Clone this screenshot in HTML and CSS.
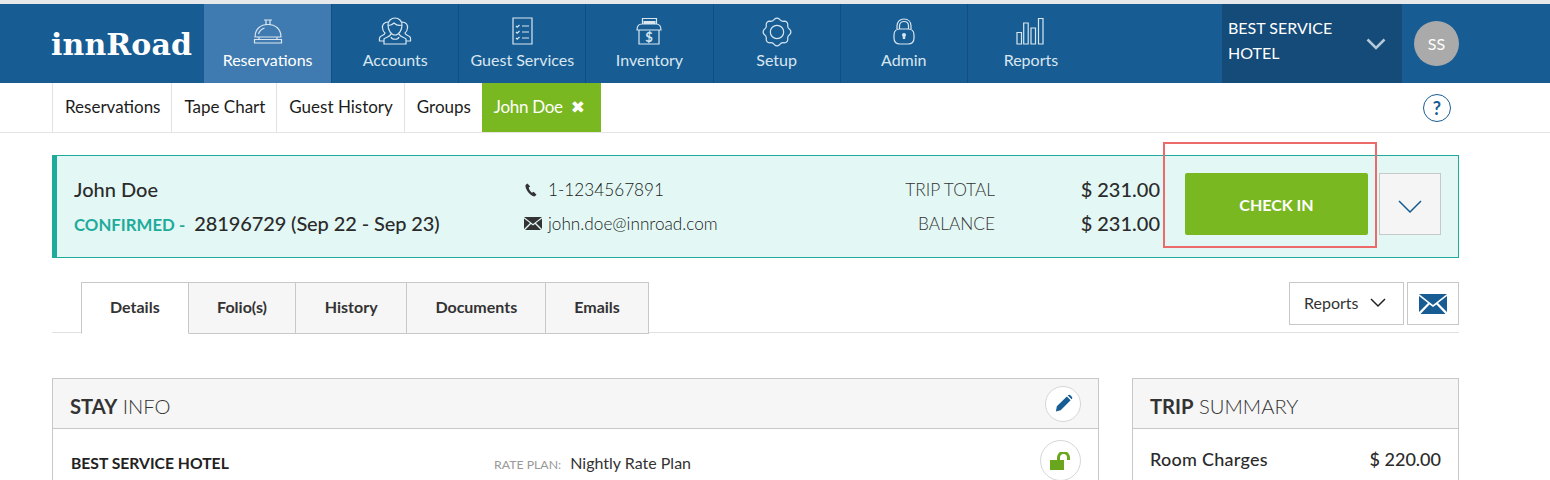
FILE: index.html
```html
<!DOCTYPE html>
<html lang="en">
<head>
    <meta charset="UTF-8">
    <title>innRoad - Reservations</title>
    <link rel="stylesheet" href="styles.css">
</head>
<body>
    <header class="top-bar">
        <a href="#" class="logo">innRoad</a>
        <nav class="main-nav">
            <a href="#" class="nav-item active">
                <svg class="nav-icon" viewBox="0 0 32 30"><path d="M3 20C3 12 8.500 7.500 16 7.500S29 12 29 20zM12 3h8M14 3v4.500M18 3v4.500M2.500 22.500h27v3.500h-27zM7 20v2.500M25 20v2.500M6.500 17c.8-3 3-5 6-6"/></svg>
                <span>Reservations</span>
            </a>
            <a href="#" class="nav-item">
                <svg class="nav-icon" viewBox="0 0 32 30"><path d="M9 8c0-4 3-7 7-7s7 3 7 7c0 5-3 10-7 10S9 13 9 8zM9 8c3 1 5-1 6-2 2 2 5 3 8 2M12 17c-1 3-5 3-7 5v5h22v-5c-2-2-6-2-7-5M12 20c1 3 7 3 8 0M9 5C5 5 3 8 3.500 11c.2 2 1 4 2.500 5 0 2-3 2-5 4-1 1-.5 3-.5 4H5M23 5c4 0 6 3 5.500 6-.2 2-1 4-2.500 5 0 2 3 2 5 4 1 1 .5 3 .5 4H27"/></svg>
                <span>Accounts</span>
            </a>
            <a href="#" class="nav-item">
                <svg class="nav-icon" viewBox="0 0 32 30"><path d="M7 1h19v26H7zM10 9l1.200 1.200L13.500 8M10 15l1.200 1.200L13.500 14M10 21l1.200 1.200L13.500 20M16 9h7M16 15h7M16 21h7"/></svg>
                <span>Guest Services</span>
            </a>
            <a href="#" class="nav-item">
                <svg class="nav-icon" viewBox="0 0 32 30"><path d="M9.500 7V1.500h14V7M4 13c0-4 2-6 5-6h14c3 0 5 2 5 6zM6 13v14h20V13"/><path class="icon-fill" d="M10.500 4h12v3h-12z"/><text x="16" y="25" class="nav-icon-text">$</text></svg>
                <span>Inventory</span>
            </a>
            <a href="#" class="nav-item">
                <svg class="nav-icon" viewBox="0 0 32 30"><circle cx="16" cy="15" r="6.700"/><path d="M28.750 12.460Q31 15 28.750 17.540Q26.160 19.210 26.810 22.220Q26.600 25.600 23.220 25.810Q20.210 25.160 18.540 27.750Q16 30 13.460 27.750Q11.790 25.160 8.780 25.810Q5.400 25.600 5.190 22.220Q5.840 19.210 3.250 17.540Q1 15 3.250 12.460Q5.840 10.790 5.190 7.780Q5.400 4.400 8.780 4.190Q11.790 4.840 13.460 2.250Q16 0 18.540 2.250Q20.210 4.840 23.220 4.190Q26.600 4.400 26.810 7.780Q26.160 10.790 28.750 12.460z"/></svg>
                <span>Setup</span>
            </a>
            <a href="#" class="nav-item">
                <svg class="nav-icon" viewBox="0 0 32 30"><path d="M9 12V9c0-4.500 3-7 7-7s7 2.500 7 7v3M11.500 12V9c0-3 2-4.500 4.500-4.500s4.500 1.500 4.500 4.500v3M6 18c0-4 2-6 6-6h8c4 0 6 2 6 6v3c0 4-2 6-6 6h-8c-4 0-6-2-6-6z"/><path class="icon-fill" d="M14 18a2 2 0 1 1 4 0c0 .8-.4 1.200-.8 1.600V22h-2.400v-2.400c-.4-.4-.8-.8-.8-1.600z"/></svg>
                <span>Admin</span>
            </a>
            <a href="#" class="nav-item">
                <svg class="nav-icon" viewBox="0 0 32 30"><path d="M2 15.500h4.500V27H2zM8.700 6h4.500v21H8.700zM16 11h4.500v16H16zM23.500 1.500H28V27h-4.500z"/></svg>
                <span>Reports</span>
            </a>
        </nav>
        <div class="top-right">
            <div class="hotel-select">
                <span class="hotel-name">BEST SERVICE HOTEL</span>
                <svg class="hotel-chevron" viewBox="0 0 20 12"><path d="M1.500 1.500L10 10l8.500-8.500"/></svg>
            </div>
            <div class="avatar">SS</div>
        </div>
    </header>

    <div class="sub-bar">
        <a href="#" class="sub-item">Reservations</a>
        <a href="#" class="sub-item">Tape Chart</a>
        <a href="#" class="sub-item">Guest History</a>
        <a href="#" class="sub-item">Groups</a>
        <a href="#" class="sub-item guest-tab">John Doe <span class="close-x">✖</span></a>
        <a href="#" class="help">?</a>
    </div>

    <main class="content">
        <section class="banner">
            <div class="banner-guest">
                <div class="guest-name">John Doe</div>
                <div class="guest-status"><span class="status">CONFIRMED -</span> 28196729 (Sep 22 - Sep 23)</div>
            </div>
            <div class="banner-contact">
                <div class="contact-row">
                    <svg class="contact-icon" viewBox="0 0 16 16"><path d="M4.500 1.500L2.500 3c-.8 3.500 4.500 11 9 11.500l2-1.800-2.800-3-1.700 1c-1.500-1-3-3.500-3.300-5.300l1.500-1z"/></svg>
                    <span>1-1234567891</span>
                </div>
                <div class="contact-row">
                    <svg class="contact-icon mail" viewBox="0 0 18 13"><path d="M0 0h18L9 7zM0 1.500V12l6-6zM18 1.500V12l-6-6zM1 13l6-6 2 1.600L11 7l6 6z"/></svg>
                    <span>john.doe@innroad.com</span>
                </div>
            </div>
            <div class="banner-totals">
                <div class="total-row"><span class="total-label">TRIP TOTAL</span><span class="total-value">$ 231.00</span></div>
                <div class="total-row"><span class="total-label">BALANCE</span><span class="total-value">$ 231.00</span></div>
            </div>
            <button class="check-in">CHECK IN</button>
            <button class="more">
                <svg viewBox="0 0 24 13"><path d="M1 1l11 11L23 1"/></svg>
            </button>
            <div class="highlight"></div>
        </section>

        <div class="tab-row">
            <div class="tabs">
                <a href="#" class="tab current">Details</a>
                <a href="#" class="tab">Folio(s)</a>
                <a href="#" class="tab">History</a>
                <a href="#" class="tab tab-docs">Documents</a>
                <a href="#" class="tab">Emails</a>
            </div>
            <div class="tab-actions">
                <button class="reports-btn">Reports
                    <svg viewBox="0 0 16 10"><path d="M1 1l7 7 7-7"/></svg>
                </button>
                <button class="mail-btn">
                    <svg viewBox="0 0 28 20"><path d="M0 0h28L14 11zM0 2v16l9-9zM28 2v16l-9-9zM1.500 20l9-9.500L14 13l3.500-2.500 9 9.500z"/></svg>
                </button>
            </div>
        </div>

        <div class="panels">
            <section class="panel stay">
                <div class="panel-head">
                    <h2><b>STAY</b> INFO</h2>
                    <span class="round-btn edit">
                        <svg viewBox="0 0 20 20"><path d="M13.500 2.500l4 4L7 17l-5 1.500L3 13zM14.500 1.500c1-1 2-1 3 0l1 1c1 1 1 2 0 3z"/></svg>
                    </span>
                </div>
                <div class="panel-body stay-body">
                    <div class="hotel-col">BEST SERVICE HOTEL</div>
                    <div class="rate-col"><span class="rate-label">RATE PLAN:</span> Nightly Rate Plan</div>
                    <span class="round-btn lock">
                        <svg viewBox="0 0 22 18"><path class="lock-body" d="M0 8h14v10H0z"/><path class="lock-arc" d="M8.500 8V5.500a5 5 0 0 1 10 0V8"/></svg>
                    </span>
                </div>
            </section>
            <section class="panel trip">
                <div class="panel-head">
                    <h2><b>TRIP</b> SUMMARY</h2>
                </div>
                <div class="panel-body trip-row">
                    <span class="trip-label">Room Charges</span>
                    <span>$ 220.00</span>
                </div>
            </section>
        </div>
    </main>
</body>
</html>
```

FILE: styles.css
```css
html, body {
    margin: 0;
    padding: 0;
    height: 480px;
    overflow: hidden;
    background-color: #fff;
    color: #2b2b2b;
    font-family: Lato, "Open Sans", sans-serif;
}

a {
    color: inherit;
    text-decoration: none;
}

button {
    font-family: inherit;
    cursor: pointer;
}

/* top bar */
.top-bar {
    display: flex;
    height: 79px;
    border-top: 4px solid #e6e8ea;
    background-color: #175d94;
}

.logo {
    width: 204px;
    box-sizing: border-box;
    padding: 21px 0 0 51px;
    color: #fff;
    font-family: "DejaVu Serif", serif;
    font-size: 30px;
    font-weight: bold;
    line-height: 40px;
    letter-spacing: 0.1px;
}

.main-nav {
    display: flex;
}

.nav-item {
    width: 127.150px;
    box-sizing: border-box;
    display: flex;
    flex-direction: column;
    align-items: center;
    padding-top: 13px;
    border-left: 1px solid #124f80;
    color: #d9e6f0;
    font-size: 16px;
    line-height: 20px;
}

.nav-item.active {
    border-left: none;
    background-color: #3f7bb0;
    color: #fff;
}

.nav-icon {
    width: 32px;
    height: 30px;
    margin-bottom: 3px;
    overflow: visible;
    fill: none;
    stroke: #d9e6f0;
    stroke-width: 1.200;
}

.nav-icon .icon-fill {
    fill: #d9e6f0;
    stroke: none;
}

.nav-icon-text {
    fill: #d9e6f0;
    stroke: none;
    font-size: 13px;
    font-weight: bold;
    text-anchor: middle;
}

.top-right {
    display: flex;
    margin-left: auto;
    padding-right: 91px;
}

.hotel-select {
    width: 180px;
    box-sizing: border-box;
    display: flex;
    align-items: center;
    justify-content: space-between;
    padding: 0 16px 0 6px;
    background-color: #154b78;
    color: #fff;
    font-size: 16px;
    line-height: 25px;
}

.hotel-name {
    width: 125px;
    margin-bottom: 8px;
}

.hotel-chevron {
    width: 20px;
    height: 12px;
    fill: none;
    stroke: #b5cad9;
    stroke-width: 2.500;
}

.avatar {
    width: 45px;
    height: 45px;
    margin: 17px 0 0 12px;
    border-radius: 50%;
    background-color: #aaa;
    color: #fff;
    font-size: 16px;
    line-height: 45px;
    text-align: center;
}

/* second row */
.sub-bar {
    display: flex;
    height: 49px;
    padding: 0 99px 0 52px;
    border-bottom: 1px solid #e4e4e4;
}

.sub-item {
    padding: 0 10.950px 0 12px;
    border-left: 1px solid #e2e2e2;
    color: #1c1c1c;
    font-size: 17px;
    line-height: 48px;
    white-space: nowrap;
}

.guest-tab {
    padding: 0 16.500px 0 12px;
    border-left: none;
    background-color: #7ab821;
    color: #fff;
    letter-spacing: -0.3px;
}

.close-x {
    margin-left: 4px;
    font-family: "DejaVu Sans", sans-serif;
    font-size: 17px;
}

.help {
    width: 26px;
    height: 26px;
    margin: 11px 0 0 auto;
    border: 1px solid #175d94;
    border-radius: 50%;
    color: #175d94;
    font-size: 18px;
    font-weight: bold;
    line-height: 26px;
    text-align: center;
}

/* content */
.content {
    padding: 22px 91px 0 52px;
}

.banner {
    position: relative;
    display: flex;
    align-items: flex-start;
    height: 103px;
    box-sizing: border-box;
    padding: 17px 0 0 17px;
    border: 1px solid #1fab9b;
    border-left-width: 5px;
    background-color: #e3f8f5;
}

.banner-guest {
    width: 450px;
    margin-top: -1px;
}

.guest-name {
    font-size: 20px;
    font-weight: 500;
    line-height: 34px;
}

.guest-status {
    font-size: 20px;
    font-weight: 500;
    line-height: 34px;
    letter-spacing: -0.1px;
}

.status {
    margin-right: 4px;
    color: #1fab9b;
    font-size: 16.800px;
    font-weight: bold;
    letter-spacing: 0;
}

.banner-contact {
    width: 350px;
    color: #1a1a1a;
    font-size: 17.200px;
    font-weight: 300;
}

.contact-row {
    display: flex;
    align-items: center;
    height: 33.500px;
}

.contact-icon {
    width: 16px;
    height: 16px;
    margin-left: -1px;
    margin-right: 9px;
    fill: #333;
}

.contact-icon.mail {
    width: 18px;
    height: 13px;
    margin-left: 0;
    margin-right: 6px;
}

.banner-totals {
    width: 286px;
}

.total-row {
    display: flex;
    justify-content: space-between;
    height: 34px;
    line-height: 34px;
}

.total-label {
    width: 121px;
    color: #333;
    font-size: 17.300px;
    font-weight: 300;
    text-align: right;
}

.total-value {
    margin-top: -1px;
    font-size: 20px;
    font-weight: 500;
    white-space: nowrap;
}

.check-in {
    width: 183px;
    height: 62px;
    margin-left: 25px;
    border: none;
    border-radius: 2px;
    background-color: #7ab821;
    color: #fff;
    font-size: 16px;
    font-weight: bold;
}

.more {
    width: 62px;
    height: 62px;
    margin-left: 11px;
    padding: 0;
    border: 1px solid #c8c8c8;
    background-color: #f5f5f5;
}

.more svg {
    display: block;
    width: 24px;
    height: 13px;
    margin: 4px auto 0;
    fill: none;
    stroke: #175d94;
    stroke-width: 1.500;
}

/* the red annotation box drawn over the screenshot */
.highlight {
    position: absolute;
    left: 1106px;
    top: -14px;
    width: 210px;
    height: 102px;
    border: 2px solid #ec6a6a;
}

/* tabs */
.tab-row {
    display: flex;
    justify-content: space-between;
    height: 50px;
    margin-top: 24px;
    padding: 0 0 0 29px;
    border-bottom: 1px solid #e0e0e0;
}

.tabs {
    display: flex;
}

.tab {
    padding: 0 28.400px;
    height: 50px;
    border: 1px solid #c8c8c8;
    border-left: none;
    background-color: #f6f6f6;
    color: #333;
    font-size: 16px;
    font-weight: bold;
    line-height: 48px;
}

.tab.tab-docs {
    padding: 0 27.600px 0 28.400px;
}

.tab.current {
    padding: 0 28px;
    border-left: 1px solid #c8c8c8;
    border-bottom-color: #fff;
    background-color: #fff;
}

.tab-actions {
    display: flex;
    gap: 3px;
    height: 43px;
}

.reports-btn {
    display: flex;
    align-items: center;
    width: 115px;
    box-sizing: border-box;
    padding: 0 0 2px 14px;
    border: 1px solid #c8c8c8;
    background-color: #fff;
    color: #333;
    font-size: 16px;
}

.reports-btn svg {
    width: 16px;
    height: 10px;
    margin-left: 12px;
    fill: none;
    stroke: #222;
    stroke-width: 1.500;
}

.mail-btn {
    width: 52px;
    padding: 0;
    border: 1px solid #c8c8c8;
    background-color: #fff;
}

.mail-btn svg {
    display: block;
    width: 28px;
    height: 20px;
    margin: 0 auto;
    fill: #175d94;
}

/* panels */
.panels {
    display: flex;
    gap: 33px;
    margin-top: 45px;
}

.panel {
    border: 1px solid #c8c8c8;
    height: 200px;
}

.panel.stay {
    width: 1045px;
}

.panel.trip {
    width: 325px;
}

.panel-head {
    display: flex;
    align-items: center;
    justify-content: space-between;
    height: 49px;
    padding: 0 17px;
    border-bottom: 1px solid #c8c8c8;
    background-color: #f6f6f6;
}

.panel-head h2 {
    margin: 4px 0 0;
    color: #333;
    font-size: 20.200px;
    font-weight: 300;
}

.panel-head b {
    font-weight: bold;
}

.panel-body {
    display: flex;
    padding: 0 17px;
}

.stay-body {
    position: relative;
    padding: 24px 17px 0 18px;
    font-size: 16px;
    line-height: 20px;
}

.hotel-col {
    width: 423px;
    color: #222;
    font-size: 15.700px;
    font-weight: bold;
}

.rate-col {
    font-size: 16px;
    color: #333;
}

.rate-label {
    margin-right: 5px;
    color: #999;
    font-size: 12.300px;
}

.round-btn {
    display: flex;
    align-items: center;
    justify-content: center;
    box-sizing: border-box;
    border: 1px solid #d6d6d6;
    border-radius: 50%;
    background-color: #fff;
}

.round-btn.edit {
    width: 36px;
    height: 36px;
}

.edit svg {
    width: 19px;
    height: 19px;
    fill: #175d94;
}

.round-btn.lock {
    position: absolute;
    right: 17px;
    top: 11px;
    width: 41px;
    height: 41px;
}

.lock svg {
    width: 22px;
    height: 18px;
}

.lock-body {
    fill: #6aa51e;
}

.lock-arc {
    fill: none;
    stroke: #6aa51e;
    stroke-width: 3;
}

.trip-row {
    justify-content: space-between;
    padding-top: 18px;
    color: #2b2b2b;
    font-size: 18px;
    font-weight: 500;
    line-height: 24px;
}

.trip-label {
    letter-spacing: 0.25px;
}
```
